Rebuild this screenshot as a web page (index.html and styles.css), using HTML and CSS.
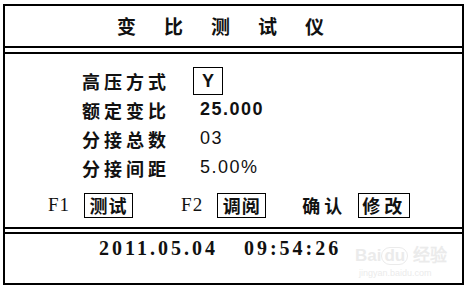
FILE: index.html
```html
<!DOCTYPE html>
<html lang="zh-CN">
  <head>
    <meta charset="UTF-8" />
    <meta name="viewport" content="width=device-width, initial-scale=1.0" />
    <title>变比测试仪</title>
    <link rel="stylesheet" href="styles.css">
  </head>
  <body>
    <div class="panel">
      <div class="title">变比测试仪</div>
      <div class="divider"></div>
      <div class="main">
        <div class="form">
          <div class="label">高压方式</div>
          <div class="value"><span class="ybox">Y</span></div>
          <div class="label">额定变比</div>
          <div class="value bold">25.000</div>
          <div class="label">分接总数</div>
          <div class="value">03</div>
          <div class="label">分接间距</div>
          <div class="value">5.00%</div>
        </div>
        <div class="keys">
          <div class="group g1"><span class="key">F1</span><span class="btn">测试</span></div>
          <div class="group g2"><span class="key">F2</span><span class="btn">调阅</span></div>
          <div class="group g3"><span class="key cn">确认</span><span class="btn wide">修改</span></div>
        </div>
      </div>
      <div class="divider short"></div>
      <div class="footer">
        <span class="date">2011.05.04</span><span class="time">09:54:26</span>
      </div>
      <div class="watermark">
        <div class="wm-logo">Bai<span class="wm-du">du</span> 经验</div>
        <div class="wm-url">jingyan.baidu.com</div>
      </div>
    </div>
  </body>
</html>
```
FILE: styles.css
```css
body {
  margin: 0;
  background-color: #ffffff;
  color: #111111;
  font-family: "Noto Sans CJK SC", sans-serif;
}
.panel {
  position: relative;
  box-sizing: border-box;
  width: 461px;
  height: 281px;
  margin: 4px 0 0 3px;
  border: 2px solid #000000;
  display: flex;
  flex-direction: column;
}
.title {
  height: 40px;
  line-height: 40px;
  padding-left: 112px;
  font-size: 19px;
  font-weight: bold;
  letter-spacing: 28px;
}
.divider {
  height: 4px;
  border-top: 2px solid #000000;
  border-bottom: 2px solid #000000;
}
.divider.short {
  height: 3px;
}
.main {
  flex: 1;
  padding: 12px 0 0 77px;
}
.form {
  display: grid;
  grid-template-columns: 118px 1fr;
  grid-auto-rows: 29px;
  align-items: center;
}
.label {
  font-size: 18px;
  font-weight: bold;
  letter-spacing: 4px;
}
.value {
  font-family: "Liberation Sans", sans-serif;
  font-size: 18px;
  letter-spacing: 1.5px;
}
.value.bold {
  font-weight: bold;
}
.ybox {
  display: inline-block;
  box-sizing: border-box;
  width: 30px;
  height: 28px;
  line-height: 26px;
  margin-left: -7px;
  border: 1px solid #000000;
  text-align: center;
  font-weight: bold;
  letter-spacing: 0;
}
.keys {
  display: flex;
  align-items: center;
  margin: 10px 0 0 -34px;
  height: 26px;
}
.group {
  display: flex;
  align-items: center;
}
.g2 {
  margin-left: 48px;
}
.g3 {
  margin-left: 36px;
}
.key {
  font-family: "Liberation Serif", serif;
  font-size: 19px;
  margin-right: 14px;
  letter-spacing: 1px;
}
.key.cn {
  font-family: "Noto Sans CJK SC", sans-serif;
  font-size: 18px;
  font-weight: bold;
  letter-spacing: 4px;
  margin-right: 12px;
}
.btn {
  box-sizing: border-box;
  width: 49px;
  height: 25px;
  line-height: 22px;
  border: 1px solid #000000;
  text-align: center;
  font-size: 18px;
  font-weight: bold;
  letter-spacing: 1px;
}
.btn.wide {
  width: 52px;
  letter-spacing: 4px;
}
.footer {
  height: 46px;
  padding: 3px 0 0 94px;
  font-family: "Liberation Serif", serif;
  font-size: 20px;
  font-weight: bold;
  letter-spacing: 3px;
  line-height: 22px;
}
.time {
  margin-left: 26px;
}
.watermark {
  position: absolute;
  left: 350px;
  top: 240px;
  color: #ebebeb;
  font-family: "Liberation Sans", sans-serif;
}
.wm-logo {
  font-size: 17px;
  font-weight: bold;
  line-height: 20px;
}
.wm-du {
  display: inline-block;
  border: 1px solid #ebebeb;
  border-radius: 9px;
  padding: 0 2px;
  line-height: 16px;
}
.wm-url {
  font-size: 9px;
  margin-left: 4px;
  line-height: 14px;
}
```
